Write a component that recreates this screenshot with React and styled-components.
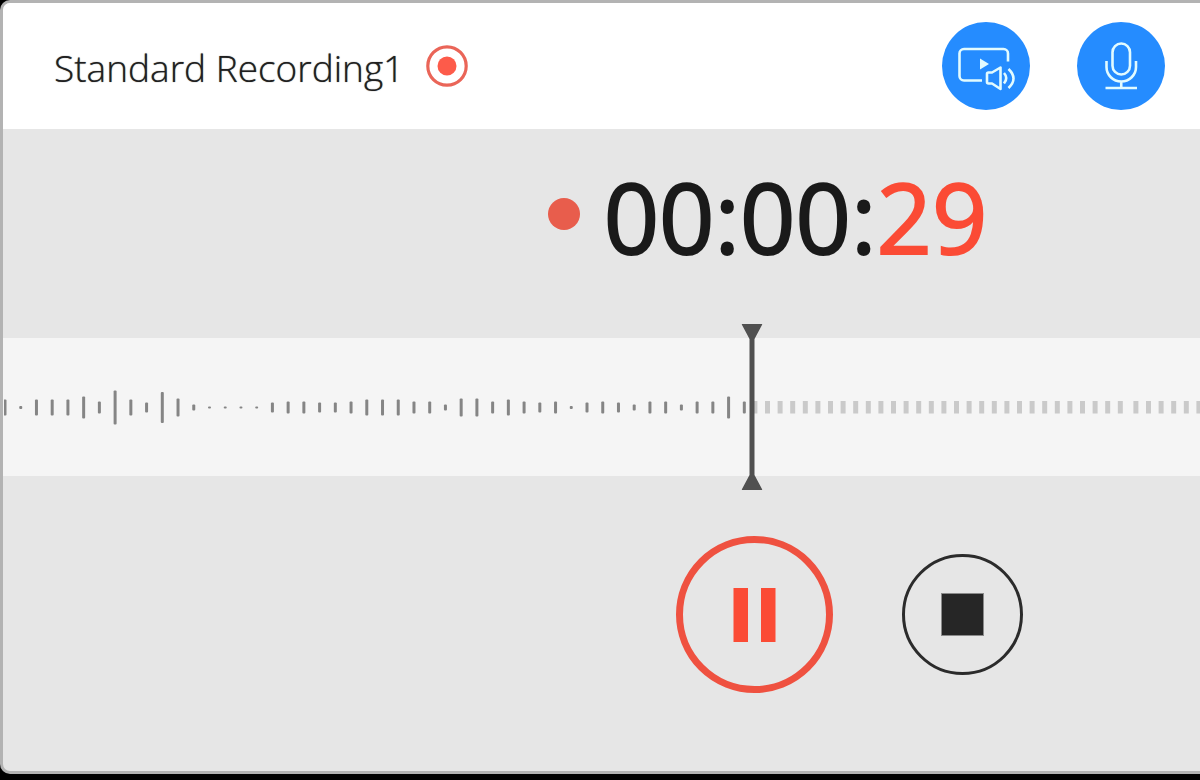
import React, { useState } from "react";
import styled, { createGlobalStyle } from "styled-components";

const GlobalStyle = createGlobalStyle`
  * {
    box-sizing: border-box;
  }
  body {
    margin: 0;
    background-color: #000000;
    font-family: "Open Sans", "Noto Sans", sans-serif;
  }
`;

const Desktop = styled.div`
  display: flex;
  min-height: 100vh;
  padding-bottom: 6px;
  background-color: #000000;
`;

/* the right edge runs off the screen, so it has no border there */
const Window = styled.main`
  flex: 1;
  min-width: 0;
  display: flex;
  flex-direction: column;
  border: 3px solid #b3b3b3;
  border-right: none;
  border-radius: 10px 0 0 10px;
  background-color: #e6e6e6;
  overflow: hidden;
`;

const Header = styled.header`
  display: flex;
  align-items: center;
  justify-content: space-between;
  height: 126px;
  padding: 0 35px 0 51px;
  background-color: #ffffff;
`;

const TitleGroup = styled.div`
  display: flex;
  align-items: center;
  gap: 22px;
`;

const Title = styled.h1`
  margin: 0;
  padding-top: 4px;
  font-size: 37px;
  line-height: 48px;
  font-weight: 300;
  color: #1f1f1f;
  text-shadow: 0 0 1px #555555;
  white-space: nowrap;
`;

const SourceGroup = styled.div`
  display: flex;
  gap: 47px;
`;

const SourceButton = styled.button`
  width: 88px;
  height: 88px;
  padding: 0;
  border: none;
  border-radius: 50%;
  background-color: #258cff;
  cursor: pointer;
  opacity: ${(props) => (props.$on ? 1 : 0.5)};

  svg {
    display: block;
  }
`;

const TimerRow = styled.section`
  display: flex;
  align-items: center;
  gap: 24px;
  height: 209px;
  padding: 0 0 39px 45.5%;
`;

const LiveDot = styled.span`
  width: 32px;
  height: 32px;
  border-radius: 50%;
  background-color: #e85d4c;
`;

const Time = styled.time`
  padding-top: 4px;
  font-size: 97px;
  line-height: 120px;
  font-weight: 500;
  color: #1a1a1a;
  -webkit-text-stroke: 2px currentColor;
  white-space: nowrap;
`;

const Seconds = styled.span`
  color: #fb4b35;
`;

const Track = styled.section`
  position: relative;
  display: flex;
  align-items: center;
  height: 138px;
  background-color: #f5f5f5;
`;

const Recorded = styled.div`
  flex: 0 0 62.7%;
  display: flex;
  justify-content: flex-end;
  overflow: hidden;

  svg {
    flex: none;
  }
`;

const Upcoming = styled.div`
  flex: 1;
  min-width: 0;
  overflow: hidden;

  svg {
    display: block;
  }
`;

const Playhead = styled.svg`
  position: absolute;
  top: -14px;
  left: 62.6%;
  transform: translateX(-50%);
`;

const Controls = styled.section`
  display: flex;
  align-items: center;
  gap: 69px;
  padding: 60px 0 77px 56.2%;
`;

const RoundButton = styled.button`
  flex: none;
  display: flex;
  align-items: center;
  justify-content: center;
  width: ${(props) => props.$size}px;
  height: ${(props) => props.$size}px;
  padding: 0;
  border: ${(props) => props.$border}px solid ${(props) => props.$color};
  border-radius: 50%;
  background-color: transparent;
  cursor: pointer;
`;

const levels = [
  16, 3, 16, 16, 16, 22, 12, 34, 16, 10, 31, 18, 6, 2, 2, 2, 2, 10, 12, 12, 10,
  10, 12, 16, 16, 16, 12, 12, 6, 18, 18, 12, 16, 12, 10, 12, 3, 10, 12, 10, 6,
  12, 12, 6, 12, 12, 22, 12,
];

const BAR_STEP = 15.73;
const TICK_STEP = 12.6;

const RecordIcon = () => (
  <svg width="42" height="42" viewBox="0 0 42 42" aria-hidden="true">
    <circle cx="21" cy="21" r="19.2" fill="none" stroke="#ea6558" strokeWidth="3.2" />
    <circle cx="21" cy="21" r="9.5" fill="#fd5b4a" />
  </svg>
);

const ScreenAudioIcon = () => (
  <svg width="88" height="88" viewBox="0 0 88 88" fill="none" stroke="#e2fbff" strokeWidth="2.6" aria-hidden="true">
    <path d="M40 58.5H22a4.5 4.5 0 0 1-4.5-4.5V31.500a4.500 4.500 0 0 1 4.500-4.500h39.500a4.500 4.500 0 0 1 4.500 4.500V39.500" />
    <path d="M38 36.5v11l9-5.5z" fill="#e2fbff" stroke="none" />
    <path d="M46.5 50.5h3.5l8.500-5v21.500l-8.500-5.500h-3.500q-1.500 0-1.500-1.500v-8q0-1.500 1.500-1.500z" strokeLinejoin="round" />
    <path d="M62 51q4.500 5 0 10.500M66.500 47q10 9.500 0 19" />
  </svg>
);

const MicIcon = () => (
  <svg width="88" height="88" viewBox="0 0 88 88" fill="none" stroke="#e2fbff" strokeWidth="2.6" aria-hidden="true">
    <rect x="35.5" y="21.5" width="17.5" height="31" rx="8.75" />
    <path d="M29.5 39v6a14.75 14.5 0 0 0 29.5 0V39M44.25 59.5v6.5M28.5 66h31.500" />
  </svg>
);

const App = () => {
  const [screenOn, setScreenOn] = useState(true);
  const [micOn, setMicOn] = useState(true);

  return (
    <>
      <GlobalStyle />
      <Desktop>
        <Window>
          <Header>
            <TitleGroup>
              <Title>Standard Recording1</Title>
              <RecordIcon />
            </TitleGroup>
            <SourceGroup>
              <SourceButton
                type="button"
                aria-label="System audio"
                aria-pressed={screenOn}
                $on={screenOn}
                onClick={() => setScreenOn(!screenOn)}
              >
                <ScreenAudioIcon />
              </SourceButton>
              <SourceButton
                type="button"
                aria-label="Microphone"
                aria-pressed={micOn}
                $on={micOn}
                onClick={() => setMicOn(!micOn)}
              >
                <MicIcon />
              </SourceButton>
            </SourceGroup>
          </Header>

          <TimerRow>
            <LiveDot />
            <Time>
              00:00:<Seconds>29</Seconds>
            </Time>
          </TimerRow>

          <Track>
            <Recorded>
              <svg width="750" height="36" viewBox="0 0 750 36" aria-hidden="true">
                {levels.map((level, i) => (
                  <rect
                    key={i}
                    x={i * BAR_STEP - 0.5}
                    y={18.5 - level / 2}
                    width="3"
                    height={level}
                    rx="1"
                    fill="#858585"
                  />
                ))}
              </svg>
            </Recorded>
            <Upcoming>
              <svg width="1200" height="36" viewBox="0 0 1200 36" aria-hidden="true">
                {/* every 30th tick leaves a little more room */}
                {Array.from({ length: 94 }, (_, i) => (
                  <rect
                    key={i}
                    x={(i - 1) * TICK_STEP + 11 + Math.floor(i / 30) * 3}
                    y="12"
                    width="5"
                    height="12.5"
                    fill="#cacaca"
                  />
                ))}
              </svg>
            </Upcoming>
            <Playhead width="21" height="166" viewBox="0 0 21 166" fill="#505050" aria-hidden="true">
              <path d="M0 0h21l-8 15v136l8 15H0l8-15V15z" />
            </Playhead>
          </Track>

          <Controls>
            <RoundButton type="button" aria-label="Pause" $size={157} $border={7} $color="#ef5140">
              <svg width="43" height="54" viewBox="0 0 43 54" fill="#fb4b35" aria-hidden="true">
                <rect x="0.5" width="14.5" height="54" />
                <rect x="28" width="14.5" height="54" />
              </svg>
            </RoundButton>
            <RoundButton type="button" aria-label="Stop" $size={121} $border={3} $color="#2b2b2b">
              <svg width="43" height="43" viewBox="0 0 43 43" aria-hidden="true">
                <rect x="0.5" y="0.5" width="42" height="42" fill="#262626" stroke="#8a8a8a" />
              </svg>
            </RoundButton>
          </Controls>
        </Window>
      </Desktop>
    </>
  );
};

export default App;
